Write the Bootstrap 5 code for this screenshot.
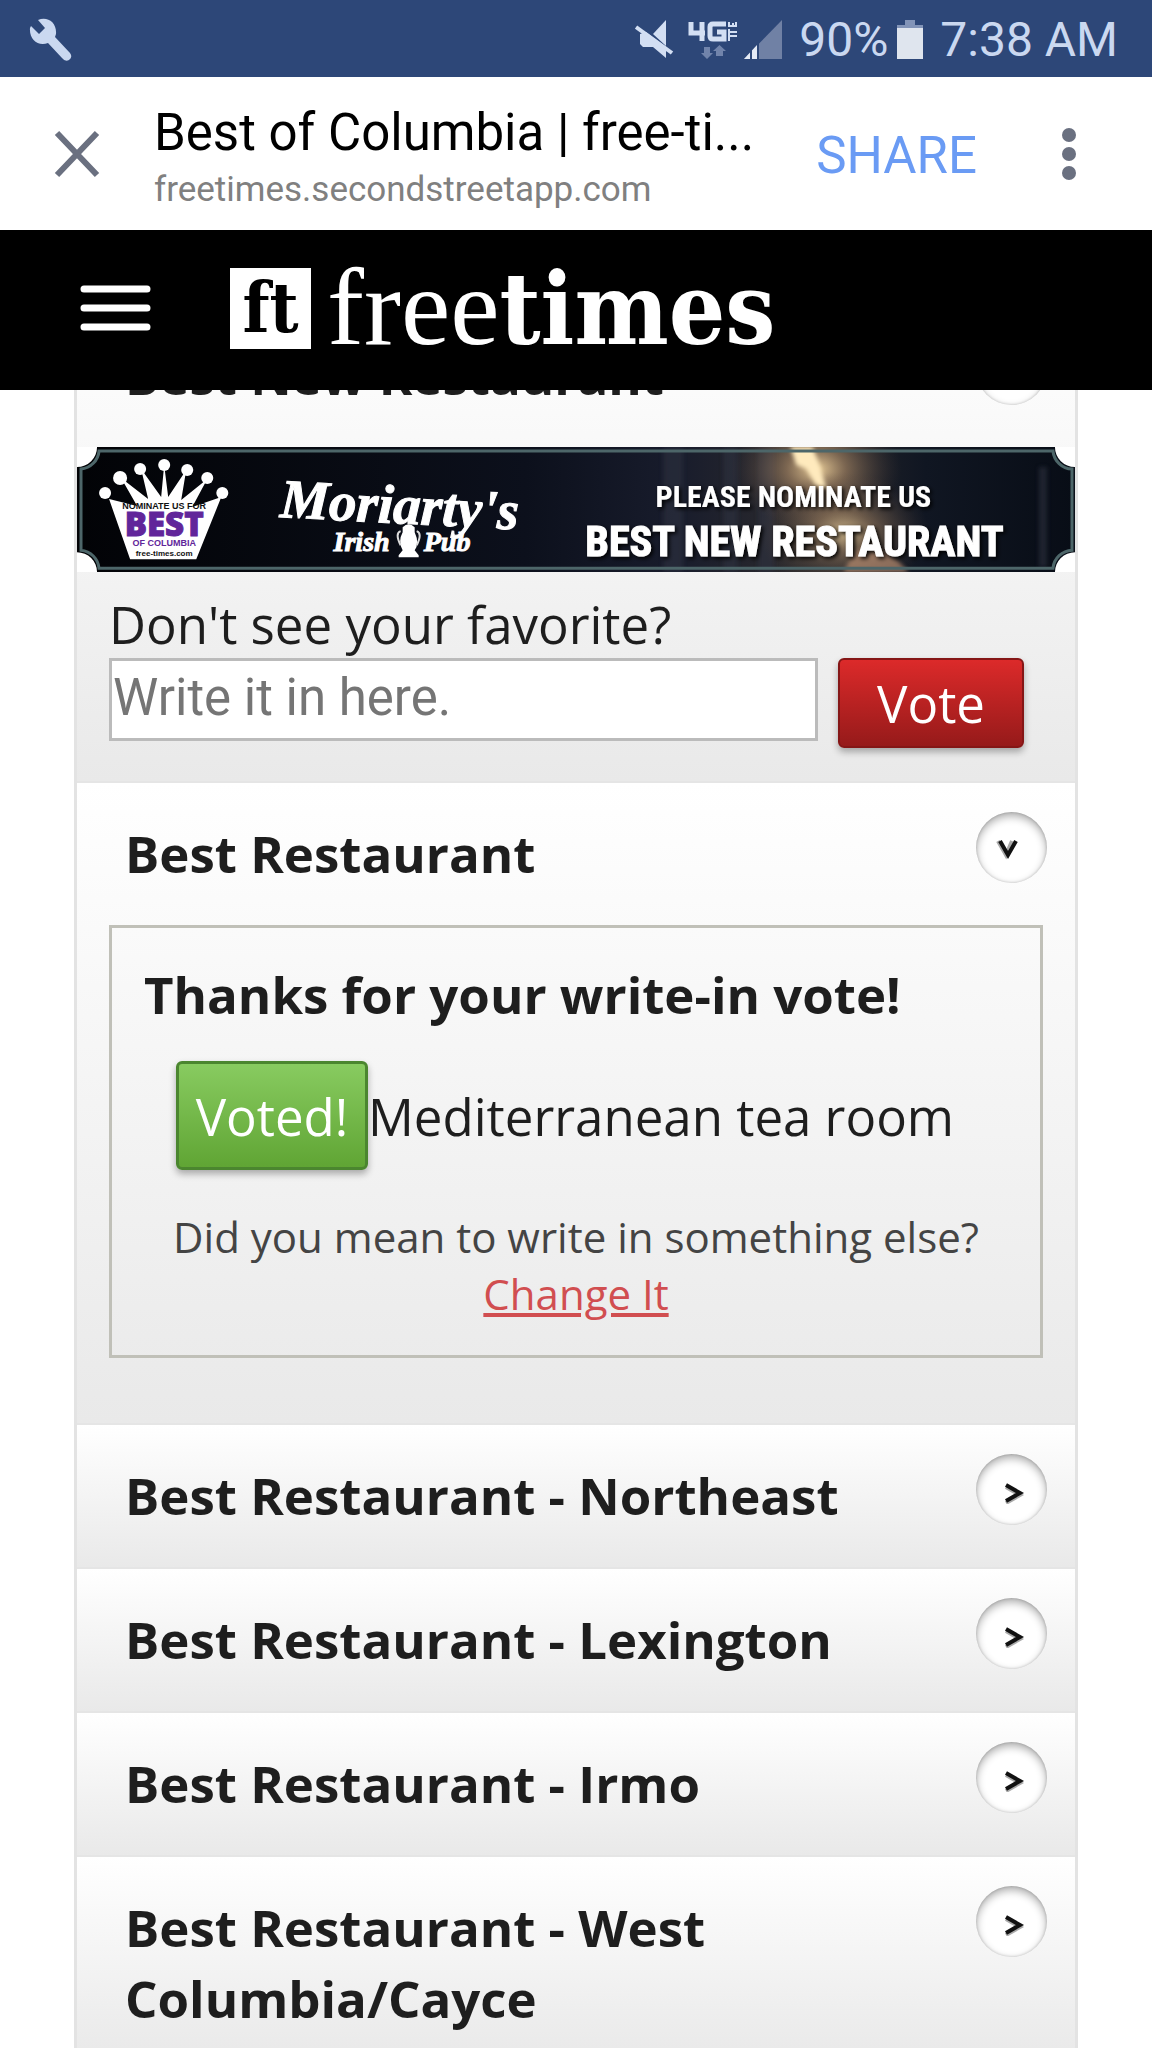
<!DOCTYPE html>
<html lang="en">
<head>
<meta charset="utf-8">
<meta name="viewport" content="width=device-width, initial-scale=1">
<title>Best of Columbia | free-times</title>
<link href="https://cdn.jsdelivr.net/npm/bootstrap@5.3.0/dist/css/bootstrap.min.css" rel="stylesheet">
<style>
  body { font-family: "Open Sans", "Noto Sans", sans-serif; color: #1e1e1e; background: #fff; }
  .status-bar { height: 77px; background: #2d4778; color: #cad8f0; font: 48px/76px Roboto, sans-serif; padding: 2px 34px 0 29px; }
  .app-bar { height: 153px; padding: 0 71px 0 50px; font-family: Roboto, sans-serif; }
  .app-heading { padding: 12px 0 0 50px; }
  .app-title { font-size: 51px; line-height: 60px; color: #000; font-weight: 400; }
  .app-url { font-size: 35px; line-height: 54px; color: #808080; }
  .share-btn { font-size: 51px; line-height: 60px; color: #6a9bf4; margin-top: 4px; }
  .more-btn { margin-left: 80px; }
  .site-header { height: 160px; background: #000; z-index: 2; padding: 0 0 4px 80px; }
  .brand-link { color: #fff; line-height: 80px; margin-left: 79px; }
  .brand-box { width: 81px; height: 81px; background: #fff; color: #000; font: bold 70px/80px "DejaVu Serif Condensed", "DejaVu Serif", serif; }
  .brand-thin { font: 111px/80px "Liberation Serif", serif; }
  .brand-bold { font: bold 99px/80px "DejaVu Serif Condensed", "DejaVu Serif", serif; }
  .ballot { margin: -85px 74px 0; border: solid #e3e3e3; border-width: 0 3px; }
  .category { background: linear-gradient(#fff, #e9e9e9); border-bottom: 2px solid #e5e5e5; }
  .category-head { padding: 29px 28px 0 48px; min-height: 142px; }
  .category-head h2 { font-size: 51px; line-height: 71px; font-weight: 700; padding-top: 6px; margin: 0; max-width: 760px; }
  .toggle-btn { width: 71px; height: 71px; border: 0; border-radius: 50%; background: #fff; box-shadow: inset 0 4px 9px rgba(0,0,0,.32), inset 0 0 3px rgba(0,0,0,.2); }
  .write-in { padding: 18px 51px 33px 32px; }
  .write-in label { font-size: 51px; line-height: 68px; }
  .write-in input { height: 83px; border: 3px solid #bbb; border-radius: 0; padding: 0 0 4px 1px; font: 51px Roboto, sans-serif; color: #222; min-width: 0; }
  .write-in input::placeholder { color: #757575; }
  .vote-btn, .voted-btn { font-size: 51px; line-height: 60px; color: #fff; border-radius: 6px; box-shadow: 0 4px 7px rgba(0,0,0,.3); padding: 0; }
  .vote-btn { width: 186px; height: 90px; border: 2px solid #851616; background: linear-gradient(#dc2a2a, #961a1a); }
  .voted-btn { width: 192px; height: 109px; border: 3px solid #4b862f; background: linear-gradient(#88cb60, #60a534); }
  .thanks-box { border: 3px solid #c0c0b8; margin: 0 32px 65px; padding: 32px 32px 33px; }
  .thanks-box h3 { font-size: 51px; line-height: 68px; font-weight: 700; margin: 0 0 33px; }
  .voted-row { padding-left: 32px; }
  .voted-name { font-size: 51px; line-height: 68px; }
  .else-note { font-size: 42px; line-height: 57px; color: #444; margin-top: 38px; }
  .else-note a { color: #d14e50; }
</style>
</head>
<body>
<div class="vh-100 overflow-hidden">

<div class="status-bar d-flex align-items-center justify-content-between">
  <svg width="44" height="44" viewBox="0 0 44 44" aria-label="Wrench"><path fill="#cad8f0" d="M9 2 C18-2 28 4 27 16 L26 19 L41 35 Q44 39 40 42 Q36 44 33 40 L19 25 C9 29 0 21 1 10 L2 8 L10 16 L16 10 Z"/></svg>
  <div class="d-flex align-items-center">
    <svg width="160" height="44" viewBox="635 17 160 44" aria-label="Muted, 4G LTE, signal">
      <g fill="#d3dff3"><path d="M653 33 L666 19 V45Z"/><path d="M640 33 L646 31 L666 46 V57 L653 46 H643 L640 43Z"/></g>
      <path d="M636 26 L672 52" stroke="#d3dff3" stroke-width="4"/>
      <path d="M691 21 V32 H705 M702 21 V40 M726 23 H713 Q710 23 710 26 V35 Q710 38 713 38 H724 V31 H717" fill="none" stroke="#d3dff3" stroke-width="5"/>
      <path d="M729 40V35H737 M729 31H737 M729 28V34 M729 26V21 M733 26V22 M736 26V21 M729 25H737" stroke="#d3dff3" stroke-width="2" fill="none"/>
      <path d="M704 46 H710 V52 H713 L707 58 L701 52 H704Z M716 55 V50 H713 L719.500 44 L726 50 H723 V55Z" fill="#7184ab"/>
      <path d="M744 58 L782 19 V58Z" fill="#7081a5"/><path d="M744 58 L757 44 V58Z" fill="#e4eaf5"/><path d="M751 58V48 M758 58V40" stroke="#2d4778" stroke-width="2"/>
    </svg>
    <span class="ms-1">90%</span>
    <svg class="ms-2 me-3" width="28" height="44" viewBox="0 0 28 44" aria-label="Battery"><path d="M9 2H19V7H27V12H1V7H9Z" fill="#8294b8"/><path d="M1 10H27V41H1Z" fill="#dfe5ee"/></svg>
    <span>7:38 AM</span>
  </div>
</div>

<div class="app-bar d-flex align-items-center">
  <button class="btn p-0 border-0 lh-1" aria-label="Close"><svg width="54" height="54" viewBox="0 0 54 54"><path d="M7 6 L47 48 M47 6 L7 48" stroke="#6a7080" stroke-width="6"/></svg></button>
  <div class="app-heading flex-grow-1">
    <h1 class="app-title m-0">Best of Columbia | free-ti...</h1>
    <div class="app-url">freetimes.secondstreetapp.com</div>
  </div>
  <button class="share-btn btn p-0 border-0">SHARE</button>
  <button class="more-btn btn p-0 border-0 lh-1" aria-label="More"><svg width="24" height="60" viewBox="0 0 24 60"><g fill="#6a7080"><circle cx="12" cy="11" r="7"/><circle cx="12" cy="30" r="7"/><circle cx="12" cy="49" r="7"/></g></svg></button>
</div>

<header class="site-header position-relative d-flex align-items-center">
  <button class="btn p-0 border-0 lh-1" aria-label="Menu"><svg width="71" height="54" viewBox="0 0 71 54"><path d="M4 8H67M4 27H67M4 46H67" stroke="#fff" stroke-width="7" stroke-linecap="round"/></svg></button>
  <a href="#" class="brand-link d-flex align-items-center text-decoration-none">
    <span class="brand-box text-center d-block me-3">ft</span>
    <span class="d-flex align-items-baseline"><span class="brand-thin">free</span><span class="brand-bold">times</span></span>
  </a>
</header>

<main class="ballot">
  <section class="category">
    <div class="category-head d-flex justify-content-between align-items-start">
      <h2>Best New Restaurant</h2>
      <button class="toggle-btn" aria-label="Collapse"><svg width="32" height="24" viewBox="0 0 32 24"><path d="M2 4L10 18L16 4" fill="none" stroke="#aaa" stroke-width="4"/><path d="M4 4L12 18L20 4" fill="none" stroke="#111" stroke-width="4"/></svg></button>
    </div>
    <svg class="d-block w-100" viewBox="0 0 996 125" role="img" aria-label="Moriarty's Irish Pub">
      <defs>
        <linearGradient id="night"><stop offset="0" stop-color="#020306"/><stop offset=".45" stop-color="#0c101c"/><stop offset=".6" stop-color="#181c2c"/><stop offset=".72" stop-color="#2b2a2d"/><stop offset=".85" stop-color="#101622"/><stop offset="1" stop-color="#080d16"/></linearGradient>
        <radialGradient id="glow"><stop offset="0" stop-color="#f4d7a0" stop-opacity=".95"/><stop offset=".35" stop-color="#b4906a" stop-opacity=".6"/><stop offset="1" stop-color="#56443c" stop-opacity="0"/></radialGradient>
        <filter id="textshade"><feDropShadow dx="2" dy="2" stdDeviation="2" flood-color="#000"/></filter>
        <filter id="soft"><feGaussianBlur stdDeviation="2"/></filter>
        <clipPath id="ticket"><path d="M20 0H976A20 20 0 0 0 996 20V105A20 20 0 0 0 976 125H20A20 20 0 0 0 0 105V20A20 20 0 0 0 20 0Z"/></clipPath>
      </defs>
      <path fill="#fff" d="M0 0H996V125H0Z"/>
      <g clip-path="url(#ticket)">
        <path fill="url(#night)" d="M0 0H996V125H0Z"/>
        <g fill="#2e3040" opacity=".6" filter="url(#soft)"><path d="M645 0h14v125h-14zM680 0h16v125h-16zM585 0h20v125h-20zM960 20h8v100h-8z"/></g>
        <ellipse cx="738" cy="22" rx="85" ry="60" fill="url(#glow)"/>
        <ellipse cx="765" cy="85" rx="85" ry="60" fill="url(#glow)" opacity=".85"/>
        <path d="M712 0H734L741 18L748 42L737 38L728 22L718 18Z" fill="#ffeabd" filter="url(#soft)"/>
        <path d="M775 105Q800 90 830 125H765Z" fill="#b78c70" filter="url(#soft)" opacity=".7"/>
      </g>
      <path d="M22 4H974A20 20 0 0 0 993 22V103A20 20 0 0 0 974 121H22A20 20 0 0 0 4 103V22A20 20 0 0 0 22 4Z" fill="none" stroke="#4d6669" stroke-width="3"/>
      <g fill="#fff">
        <path d="M32 52L60 59L44 31L71 52L64 22L84 50L87 18L91 50L109 23L104 53L130 32L115 60L144 50L119 112H53Z"/>
        <circle cx="28" cy="46" r="6"/><circle cx="43" cy="31" r="7"/><circle cx="63" cy="22" r="6"/><circle cx="87" cy="18" r="6"/><circle cx="110" cy="23" r="6"/><circle cx="130" cy="31" r="6"/><circle cx="145" cy="46" r="6"/>
      </g>
      <g text-anchor="middle" font-family="Liberation Sans, sans-serif" font-weight="bold">
        <text x="87" y="62" font-size="9" fill="#111">NOMINATE US FOR</text>
        <text x="87" y="89" font-family="Open Sans, sans-serif" font-weight="800" font-size="33" fill="#61259a" stroke="#61259a">BEST</text>
        <text x="87" y="99" font-size="9" fill="#61259a">OF COLUMBIA</text>
        <text x="87" y="109" font-size="8" fill="#111">free-times.com</text>
      </g>
      <g fill="#fff" stroke="#fff" font-family="Liberation Serif, serif" font-weight="bold" font-style="italic">
        <text x="202" y="70" font-size="55" transform="rotate(3 202 70)">Moriarty's</text>
        <text x="256" y="104" font-size="28">Irish</text><text x="346" y="104" font-size="28">Pub</text>
      </g>
      <path d="M325 80Q331 74 337 80V85Q342 96 337 103L341 108V110H321V108L325 103Q320 94 325 85Z" fill="#fff"/><path d="M323 98Q317 86 323 84M339 98Q345 86 339 84" fill="none" stroke="#ddd" stroke-width="2"/>
      <g fill="#fff" text-anchor="middle" filter="url(#textshade)" font-family="Liberation Sans Narrow, Roboto Condensed, Roboto, sans-serif" font-weight="bold">
        <text x="715" y="60" font-size="30">PLEASE NOMINATE US</text>
        <text x="716" y="109" font-size="42" stroke="#fff">BEST NEW RESTAURANT</text>
      </g>
    </svg>
    <form class="write-in">
      <label for="writein" class="d-block">Don't see your favorite?</label>
      <div class="d-flex align-items-start">
        <input id="writein" type="text" class="flex-grow-1 me-3 bg-white" placeholder="Write it in here.">
        <button type="button" class="vote-btn ms-1">Vote</button>
      </div>
    </form>
  </section>

  <section class="category">
    <div class="category-head d-flex justify-content-between align-items-start">
      <h2>Best Restaurant</h2>
      <button class="toggle-btn" aria-label="Collapse"><svg width="32" height="24" viewBox="0 0 32 24"><path d="M2 4L10 18L16 4" fill="none" stroke="#aaa" stroke-width="4"/><path d="M4 4L12 18L20 4" fill="none" stroke="#111" stroke-width="4"/></svg></button>
    </div>
    <div class="thanks-box">
      <h3>Thanks for your write-in vote!</h3>
      <div class="voted-row d-flex align-items-center">
        <button class="voted-btn flex-shrink-0">Voted!</button>
        <span class="voted-name">Mediterranean tea room</span>
      </div>
      <div class="else-note text-center">Did you mean to write in something else?<br><a href="#">Change It</a></div>
    </div>
  </section>

  <section class="category">
    <div class="category-head d-flex justify-content-between align-items-start">
      <h2>Best Restaurant - Northeast</h2>
      <button class="toggle-btn" aria-label="Expand"><svg width="28" height="28" viewBox="0 0 28 28"><path d="M8 11L22 19L8 27" fill="none" stroke="#aaa" stroke-width="4"/><path d="M8 9L22 17L8 25" fill="none" stroke="#111" stroke-width="4"/></svg></button>
    </div>
  </section>
  <section class="category">
    <div class="category-head d-flex justify-content-between align-items-start">
      <h2>Best Restaurant - Lexington</h2>
      <button class="toggle-btn" aria-label="Expand"><svg width="28" height="28" viewBox="0 0 28 28"><path d="M8 11L22 19L8 27" fill="none" stroke="#aaa" stroke-width="4"/><path d="M8 9L22 17L8 25" fill="none" stroke="#111" stroke-width="4"/></svg></button>
    </div>
  </section>
  <section class="category">
    <div class="category-head d-flex justify-content-between align-items-start">
      <h2>Best Restaurant - Irmo</h2>
      <button class="toggle-btn" aria-label="Expand"><svg width="28" height="28" viewBox="0 0 28 28"><path d="M8 11L22 19L8 27" fill="none" stroke="#aaa" stroke-width="4"/><path d="M8 9L22 17L8 25" fill="none" stroke="#111" stroke-width="4"/></svg></button>
    </div>
  </section>
  <section class="category">
    <div class="category-head d-flex justify-content-between align-items-start pb-4">
      <h2>Best Restaurant - West Columbia/Cayce</h2>
      <button class="toggle-btn" aria-label="Expand"><svg width="28" height="28" viewBox="0 0 28 28"><path d="M8 11L22 19L8 27" fill="none" stroke="#aaa" stroke-width="4"/><path d="M8 9L22 17L8 25" fill="none" stroke="#111" stroke-width="4"/></svg></button>
    </div>
  </section>
</main>
</div>
<script src="https://cdn.jsdelivr.net/npm/bootstrap@5.3.0/dist/js/bootstrap.bundle.min.js"></script>
</body>
</html>
